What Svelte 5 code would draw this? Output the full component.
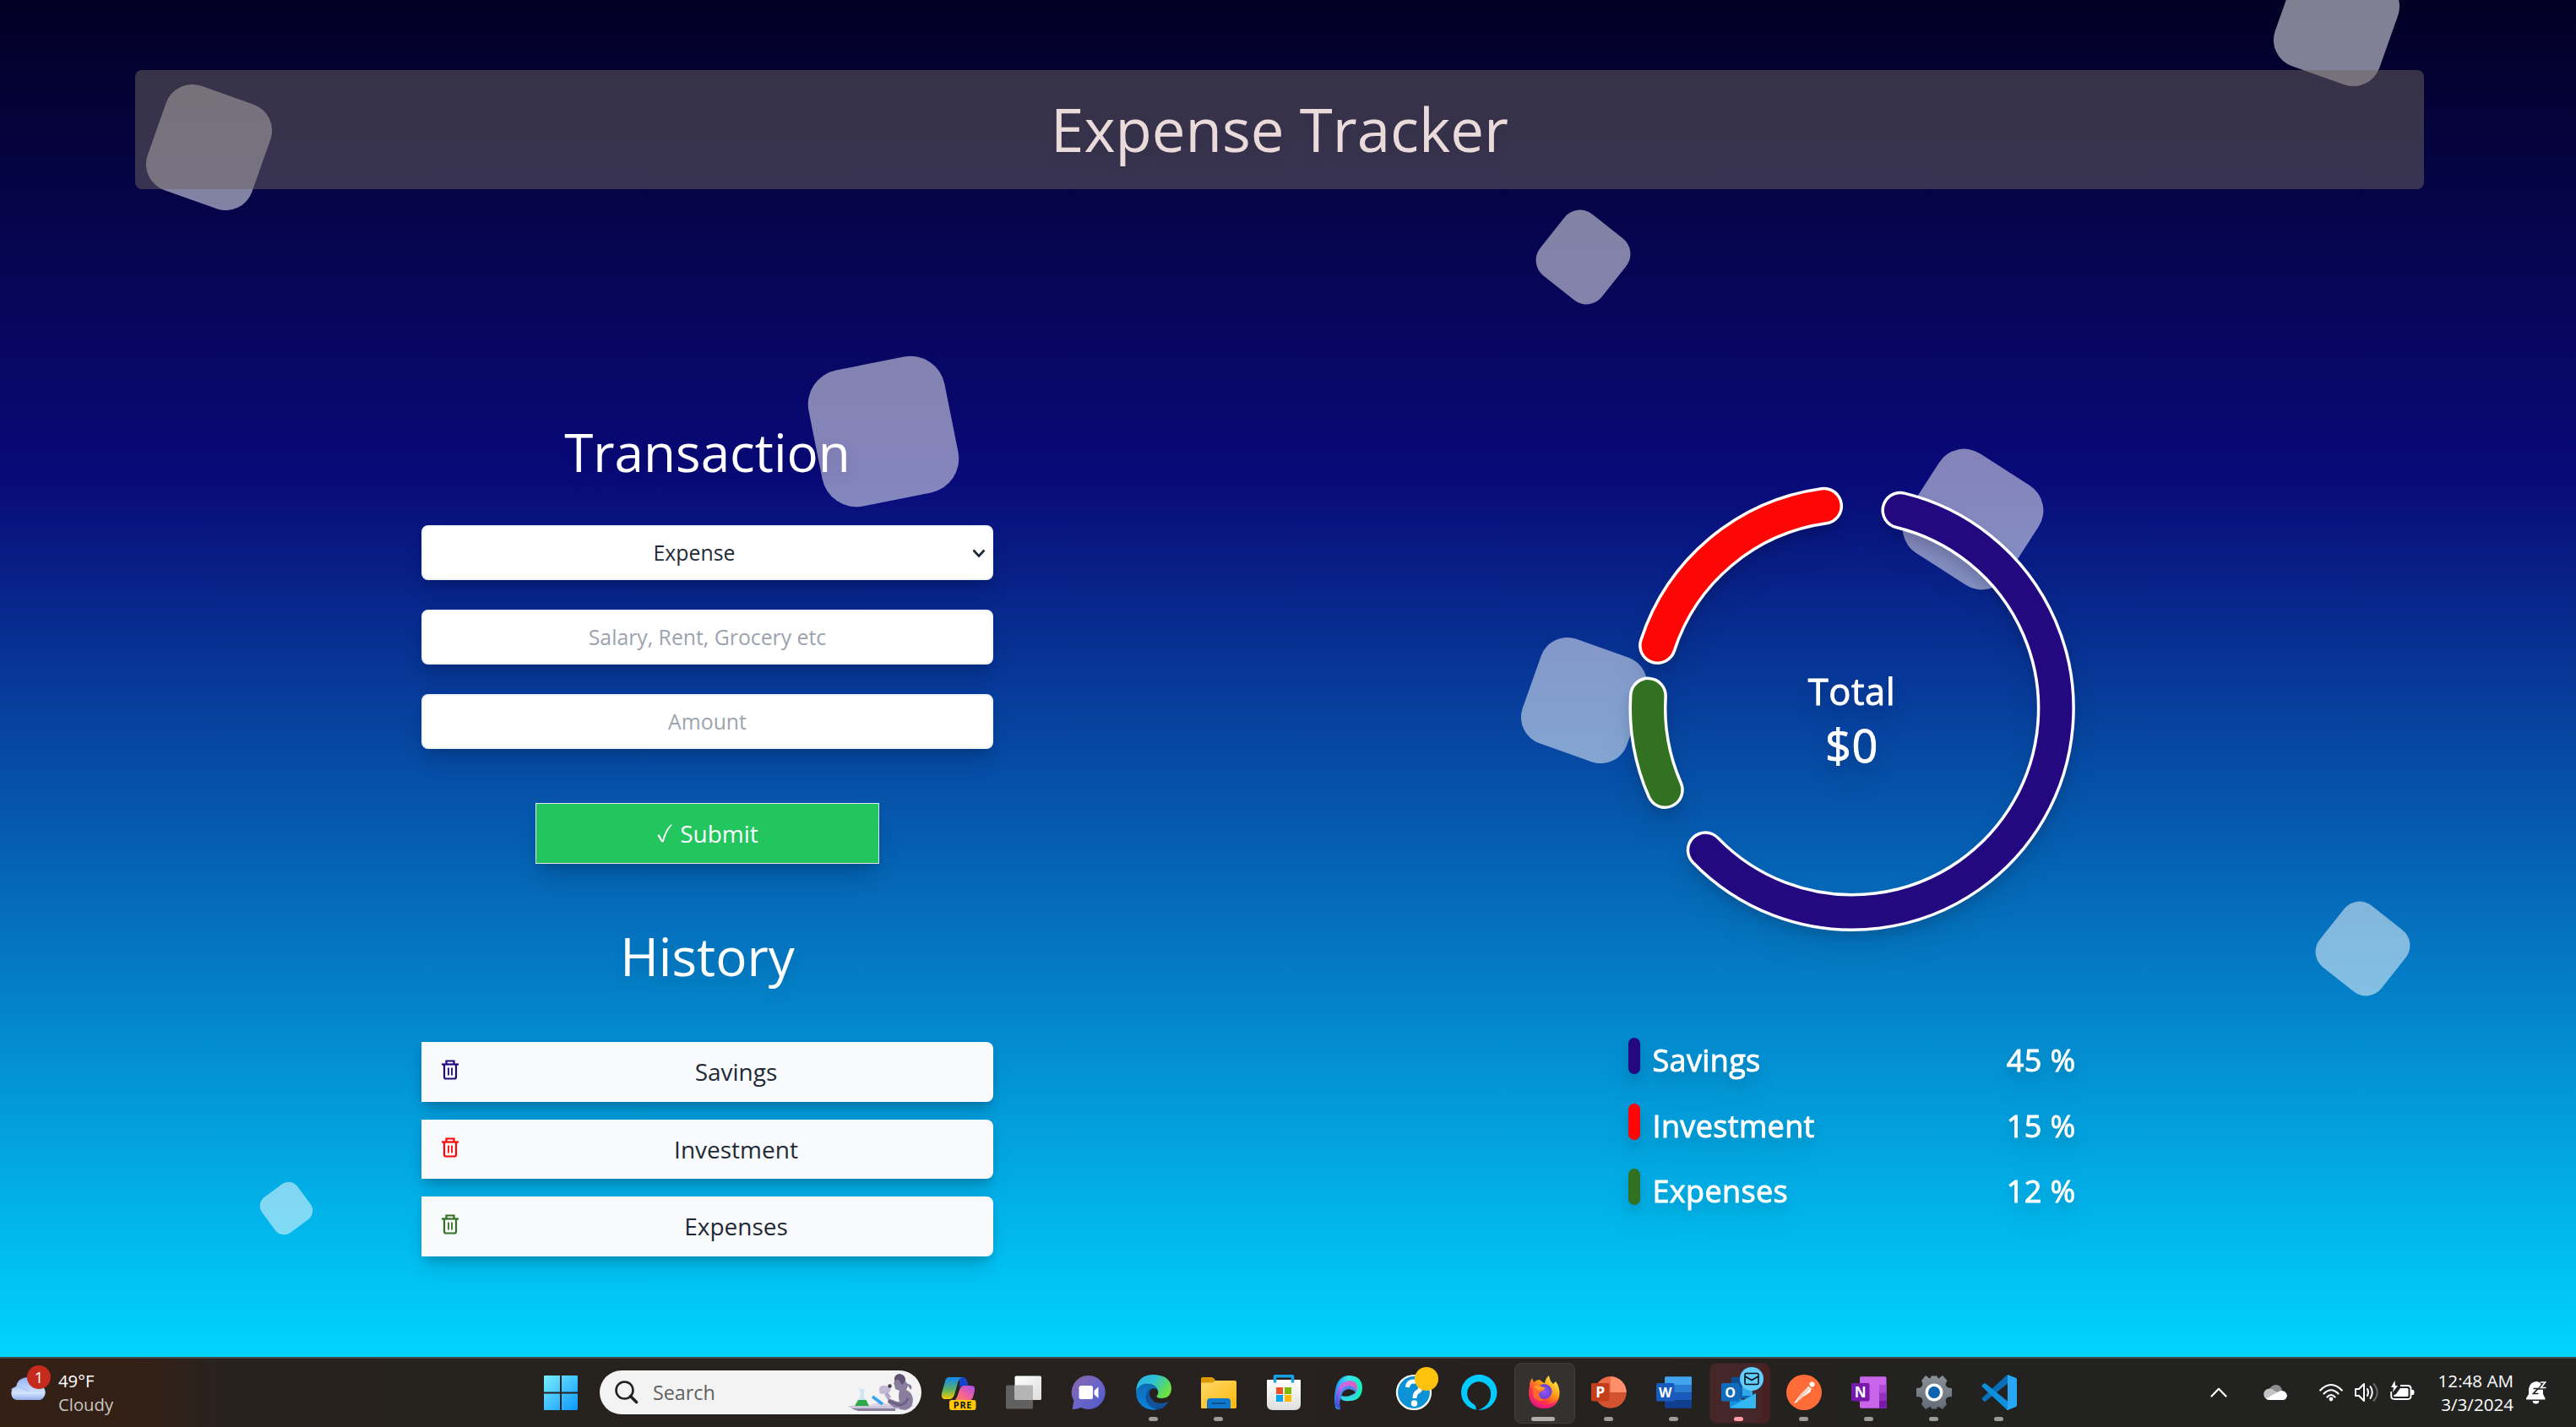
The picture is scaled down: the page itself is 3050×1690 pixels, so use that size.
<script>
  const squares = [
    { x: 247, y: 174.6, s: 131, a: 19.5 },
    { x: 2766.5, y: 27.5, s: 131, a: 19.5 },
    { x: 1874.6, y: 304, s: 93, a: 38.5 },
    { x: 1046, y: 510.6, s: 164, a: -11.3 },
    { x: 2336, y: 614.5, s: 140, a: 32.8 },
    { x: 1875, y: 829.4, s: 131, a: 19.5 },
    { x: 2797, y: 1123, s: 93, a: 38.5 },
    { x: 339, y: 1431, s: 52, a: 53.5 }
  ];
  const items = [
    { name: 'Savings', pct: 45, color: '#23087f' },
    { name: 'Investment', pct: 15, color: '#ff0606' },
    { name: 'Expenses', pct: 12, color: '#327022' }
  ];
  const arcs = [
    { d: 'M56.9 -234.2A241.500 241.500 0 1 1 -173.8 168.3', color: '#23087f' },
    { d: 'M-221.7 97A242 242 0 0 1 -241.6 -14.4', color: '#327022' },
    { d: 'M-230.4 -74A242 242 0 0 1 -33.4 -239.2', color: '#ff0606' }
  ];
</script>

<div class="screen">
  <main class="page">
    <div class="squares">
      {#each squares as q}
        <i style="left:{q.x - q.s / 2}px;top:{q.y - q.s / 2}px;width:{q.s}px;height:{q.s}px;transform:rotate({q.a}deg)"></i>
      {/each}
    </div>
    <header><h1>Expense Tracker</h1></header>
    <div class="columns">
      <section class="left">
        <h2>Transaction</h2>
        <form>
          <div class="select">
            <select><option>Expense</option></select>
            <svg class="arrow" width="18" height="13" viewBox="0 0 18 13"><path d="M2.5 2.5l6.5 7 6.5-7" fill="none" stroke="#1f2937" stroke-width="2.6" /></svg>
          </div>
          <input placeholder="Salary, Rent, Grocery etc" />
          <input placeholder="Amount" />
          <button type="button" class="submit">
            <svg width="20" height="24" viewBox="0 0 20 24"><path d="M1.3 14.2L3.6 13.2L7.4 20.3C9.3 12.4 12.600 5.8 17.400 1.600L18.800 1.600C14.200 7.200 10.600 14 8.800 22.300L6.300 22.300Z" fill="#fff" /></svg>
            <span>Submit</span>
          </button>
        </form>
        <h2 class="history-title">History</h2>
        <div class="history">
          {#each items as it}
            <div class="item">
              <svg width="20" height="24" viewBox="0 0 20 24" fill="none" stroke={it.color} stroke-width="2.200">
                <path d="M0 5.500H20" /><path d="M5.500 5V1.500H14.500V5" /><path d="M3 6V20.500Q3 22.500 5 22.500H15Q17 22.500 17 20.500V6" /><path d="M8 9.500V18.500M12 9.500V18.500" stroke-width="1.800" />
              </svg>
              <span>{it.name}</span>
            </div>
          {/each}
        </div>
      </section>
      <section class="right">
        <div class="donut">
          <svg width="530" height="530" viewBox="-265 -265.500 530 530" fill="none" stroke-linecap="round">
            {#each arcs as a}
              <path d={a.d} stroke="#fff" stroke-width="45" />
              <path d={a.d} stroke={a.color} stroke-width="38" />
            {/each}
          </svg>
          <div class="total"><b>Total</b><strong>$0</strong></div>
        </div>
        <div class="legend">
          {#each items as it}
            <div class="row">
              <svg width="14" height="43"><rect width="14" height="43" rx="7" fill={it.color} /></svg>
              <span>{it.name}</span><em>{it.pct} %</em>
            </div>
          {/each}
        </div>
      </section>
    </div>
  </main>

  <footer class="taskbar">
    <div class="weather">
      <svg width="50" height="50" viewBox="0 0 50 50">
        <defs><linearGradient id="cl" x1="0" y1="0" x2="0" y2="1"><stop offset="0" stop-color="#8fb1f3" /><stop offset=".7" stop-color="#d3e2fa" /><stop offset="1" stop-color="#8fadea" /></linearGradient></defs>
        <path d="M8 43a8 8 0 0 1-1-15.500a12.500 12.500 0 0 1 24-3.500a10 10 0 0 1 5 19Z" fill="url(#cl)" />
        <path d="M1.500 31Q8 25 15 29T22 32" fill="none" stroke="#a9c2f2" stroke-width="1.500" />
        <circle cx="34" cy="16" r="14" fill="#c42b1c" />
        <text x="34" y="22.800" text-anchor="middle" font-size="18.500" fill="#fff">1</text>
      </svg>
      <div class="wtext"><span>49°F</span><span class="dim">Cloudy</span></div>
    </div>

    <svg class="start" width="42" height="42" viewBox="0 0 42 42">
      <defs><linearGradient id="wn" gradientUnits="userSpaceOnUse" x1="0" y1="0" x2="42" y2="42"><stop offset="0" stop-color="#7cf1ff" /><stop offset="1" stop-color="#0a95ff" /></linearGradient></defs>
      <path d="M2 1H20V20.500H1V2Q1 1 2 1ZM22 1H40Q41 1 41 2V20.500H22ZM1 22.500H20V42H2Q1 42 1 41ZM22 22.500H41V41Q41 42 40 42H22Z" fill="url(#wn)" />
    </svg>

    <div class="search">
      <svg width="28" height="28" viewBox="0 0 28 28" fill="none" stroke="#222" stroke-width="2.600"><circle cx="11.500" cy="11.500" r="10" /><path d="M18.500 18.500L25.500 25.500" stroke-width="3.600" stroke-linecap="round" /></svg>
      <span>Search</span>
      <svg class="art" width="78" height="46" viewBox="0 0 78 46">
        <path d="M0 39L78 38L70 43L8 44Z" fill="#cbc4da" /><path d="M4 42H56V45H12Z" fill="#877f9b" />
        <path d="M25 38Q38 33 53 38Z" fill="#d8cfe2" />
        <path d="M13 19H20V20.500H19V28L25 39H8L14.500 28V20.500H13Z" fill="#cfe4ee" /><path d="M12 32H21.500L25 39H8Z" fill="#2fa84c" />
        <path d="M29 28L41 37" stroke="#38a5f3" stroke-width="3.600" />
        <path d="M37 19Q38 14 44 15L50 17Q52 22 47 24L40 25Q36 24 37 19Z" fill="#c5b8d5" /><circle cx="49.500" cy="15.500" r="2.300" fill="#474052" />
        <path d="M45 24L49 30" stroke="#b5a9c9" stroke-width="5" />
        <path d="M55 10Q54 2 61 1Q68 2 68 9Q69 13 74 14Q77 17 74 20L71 15Q70 18 69 20Q76 23 77 31Q77 42 68 44L61 43L61 41H55L47 35L48 30L53 32L58 34L61 34Q59 27 61 21L56 19L55 14L54 13Z" fill="#8a7e9f" />
        <path d="M55 10Q54 2 61 1Q68 2 68 9L64 14Q62 11 60 8Q57 7 55 10Z" fill="#5e5470" />
        <path d="M48 33L60 38Q68 38 71 30" fill="none" stroke="#6d6284" stroke-width="3" />
      </svg>
    </div>

    <nav class="apps">
      <div class="app">
        <svg width="42" height="42" viewBox="0 0 42 42">
          <defs>
            <linearGradient id="cp1" x1="0" y1="0" x2="0" y2="1"><stop offset=".1" stop-color="#1a8fe0" /><stop offset=".6" stop-color="#63b45a" /><stop offset="1" stop-color="#ffc800" /></linearGradient>
            <linearGradient id="cp2" x1="1" y1="0" x2="0" y2="1"><stop offset="0" stop-color="#a64df0" /><stop offset=".5" stop-color="#ee5f9d" /><stop offset="1" stop-color="#ff8a56" /></linearGradient>
          </defs>
          <path d="M22 3H26Q30 3 31 8L33 13H27Q23 13 22 17Z" fill="#1743c7" />
          <path d="M10 3H25Q21 5 20 10L16 24Q14 29 10 29H4Q0 28 1 22L5 8Q6 3 10 3Z" fill="url(#cp1)" />
          <path d="M27 13H36Q41 13 40 19L38 27Q36 31 31 31H15Q18 30 20 24Q23 13 27 13Z" fill="url(#cp2)" />
          <rect x="10" y="30" width="31.500" height="12" rx="3" fill="#ffc60a" />
          <text x="26" y="40" text-anchor="middle" font-size="11" font-weight="700" letter-spacing=".7" fill="#151515">PRE</text>
        </svg>
      </div>
      <div class="app">
        <svg width="42" height="42" viewBox="0 0 42 42">
          <defs><linearGradient id="tv" x1="0" y1="0" x2="1" y2="1"><stop offset="0" stop-color="#fff" /><stop offset="1" stop-color="#dcdcdc" /></linearGradient></defs>
          <rect x="0" y="12.500" width="32" height="28" rx="1.500" fill="#606060" /><rect x="10.500" y="1.500" width="31.500" height="28.500" rx="1.500" fill="url(#tv)" /><path d="M10.500 12.500H30.500Q32 12.500 32 14V30H12Q10.500 30 10.500 28.500Z" fill="#b4b4b4" />
        </svg>
      </div>
      <div class="app">
        <svg width="42" height="42" viewBox="0 0 42 42">
          <defs><linearGradient id="ch" x1="0" y1="0" x2="1" y2="1"><stop offset="0" stop-color="#8b64a8" /><stop offset=".5" stop-color="#6b66c9" /><stop offset="1" stop-color="#5157c8" /></linearGradient></defs>
          <path d="M21 1A20 20 0 1 1 12 39Q7 41 2.500 41Q1 41 2 39L3.500 31A20 20 0 0 1 21 1Z" fill="url(#ch)" />
          <rect x="9.500" y="13" width="16.500" height="16" rx="2.500" fill="#fff" /><path d="M27.500 19L32.500 14.500V28L27.500 23.500Z" fill="#fff" />
        </svg>
      </div>
      <div class="app">
        <svg width="42" height="42" viewBox="0 0 42 42">
          <defs>
            <linearGradient id="eg" x1="0" y1="0" x2="1" y2=".5"><stop offset="0" stop-color="#2eaef0" /><stop offset=".5" stop-color="#2dc2d2" /><stop offset="1" stop-color="#6be03e" /></linearGradient>
            <linearGradient id="eb" x1="0" y1="0" x2="0" y2="1"><stop offset="0" stop-color="#0d6bb5" /><stop offset="1" stop-color="#0a84de" /></linearGradient>
          </defs>
          <path d="M0 20Q1 0 21 0Q42 1 42 17Q41 28 30 28Q24 28 24.500 25Q27 23 26 19Q23 10 12 11Q4 12 0 20Z" fill="url(#eg)" />
          <path d="M0 21Q2 11 13 10.500Q23 11 26 18Q24 16 20 16Q13 18 12 26Q13 38 26 41Q20 43 12 40Q0 34 0 21Z" fill="url(#eb)" />
          <path d="M20 16Q15 18 16 24Q19 34 30 34Q35 34 39 31Q34 41 25 41Q12 38 11.500 27Q12 18 20 16Z" fill="#10529b" />
        </svg><i class="dot"></i>
      </div>
      <div class="app">
        <svg width="42" height="42" viewBox="0 0 42 42">
          <defs><linearGradient id="fo" x1="0" y1="0" x2="1" y2="1"><stop offset="0" stop-color="#ffd869" /><stop offset="1" stop-color="#fab90c" /></linearGradient></defs>
          <path d="M0 5Q0 3 2 3H12Q14 3 16 5L18 10H0Z" fill="#dd9a00" /><path d="M0 9.500H12Q15 9.500 17 7H40Q42 7 42 9V38.500Q42 40 40.500 40H1.500Q0 40 0 38.500Z" fill="url(#fo)" />
          <path d="M7 40V32Q7 28 11 28H31Q35 28 35 32V40Z" fill="#0f78cc" /><path d="M13 34H29" stroke="#08518f" stroke-width="2" />
        </svg><i class="dot"></i>
      </div>
      <div class="app">
        <svg width="42" height="42" viewBox="0 0 42 42">
          <defs><linearGradient id="st" x1="0" y1="0" x2="0" y2="1"><stop offset="0" stop-color="#fff" /><stop offset="1" stop-color="#dedede" /></linearGradient></defs>
          <path d="M2 6H40Q41 6 41 7V35Q41 42 34 42H8Q1 42 1 35V7Q1 6 2 6Z" fill="url(#st)" />
          <path d="M10.500 9.500V1.800H31.500V9.500" fill="none" stroke="#199ee2" stroke-width="3.500" stroke-linejoin="round" />
          <path d="M12 15h8v8h-8z" fill="#f25022" /><path d="M22 15h8v8h-8z" fill="#7fba00" /><path d="M12 24h8v8h-8z" fill="#00a4ef" /><path d="M22 24h8v8h-8z" fill="#ffb900" />
        </svg>
      </div>
      <div class="app">
        <svg width="42" height="42" viewBox="0 0 42 42">
          <defs>
            <linearGradient id="p1" x1="0" y1=".3" x2="1" y2=".4"><stop offset="0" stop-color="#1b8df5" /><stop offset=".45" stop-color="#3be3f0" /><stop offset="1" stop-color="#10f0b4" /></linearGradient>
            <linearGradient id="p2" x1="0" y1="1" x2="1" y2="0"><stop offset="0" stop-color="#1748d8" /><stop offset=".5" stop-color="#c06af0" /><stop offset="1" stop-color="#e35bb8" /></linearGradient>
          </defs>
          <path d="M5 38Q3 30 5 18Q8 1 22 1Q37 2 37 16Q36 31 22 31Q14 32 11 28Q8 33 11 41Q6 42 5 38Z" fill="url(#p1)" />
          <path d="M5 36Q4 9 22 7Q32 8 31 16Q31 25 22 26Q14 27 12 26Q9 32 11 41Q7 41 5 36Z" fill="url(#p2)" />
          <path d="M9 30Q10 14 22 13Q29 15 30 19Q28 25 20 26Q14 26 12 27Z" fill="#4f86ec" /><path d="M12 26Q13 18 21 17Q27 18 29 21Q27 26 20 26Z" fill="#25211f" /><path d="M12 25Q21 28 31 20Q30 29 20 30Q13 30 12 25Z" fill="#36d5df" />
        </svg>
      </div>
      <div class="app">
        <svg width="42" height="42" viewBox="0 0 42 42">
          <circle cx="21" cy="21" r="20" fill="#0b93d6" stroke="#fff" stroke-width="2.200" />
          <path d="M13.500 15Q14 8 21 8Q29 8 29 15Q29 19 24.500 21Q22 23 22 28" fill="none" stroke="#fff" stroke-width="5" /><circle cx="21.500" cy="34" r="3.800" fill="#fff" />
          <circle cx="36" cy="5" r="14" fill="#ffc20e" />
        </svg>
      </div>
      <div class="app">
        <svg width="42" height="42" viewBox="0 0 42 42"><path fill-rule="evenodd" d="M21 0A21 21 0 0 1 22 42H19.500Q24 41 27 38.500A18 18 0 0 0 35 21A14 14 0 1 0 13 33.800Q17.500 36 17.500 39V41.700A21 21 0 0 1 21 0Z" fill="#00caff" /></svg>
      </div>
      <div class="app active">
        <svg width="42" height="42" viewBox="0 0 42 42">
          <defs>
            <linearGradient id="ff" x1="1" y1="0" x2=".2" y2="1"><stop offset=".1" stop-color="#fff04a" /><stop offset=".45" stop-color="#ff980e" /><stop offset=".72" stop-color="#ff3647" /><stop offset="1" stop-color="#e3158a" /></linearGradient>
            <radialGradient id="fp"><stop offset="0" stop-color="#9059ff" /><stop offset="1" stop-color="#6a3fcd" /></radialGradient>
          </defs>
          <path d="M4 14Q4 8 7 4L9 9Q12 6 16 6Q19 9 22 10Q23 4 27 1Q28 8 32 11L35 8Q40 15 39.500 23Q38 40 21 40Q3 39 3 21Z" fill="url(#ff)" />
          <circle cx="21.500" cy="20" r="9" fill="url(#fp)" />
          <path d="M8 14Q13 12 16 14L22 18Q18 20 15 22Q15 29 23 30Q15 33 9 27Q7 21 8 14Z" fill="#ff6a2c" /><path d="M9 14Q14 12 18 14L23 16Q19 19 15 19Z" fill="#ff9e20" />
          <path d="M4 27Q12 37 24 36Q34 34 38 28Q35 40 21 40Q8 40 4 27Z" fill="#ea1680" opacity=".65" />
        </svg><i class="dot wide"></i>
      </div>
      <div class="app">
        <svg width="42" height="42" viewBox="0 0 42 42">
          <circle cx="23" cy="21" r="18.700" fill="#d35230" /><path d="M23 2.300V21H4.300A18.700 18.700 0 0 1 23 2.300Z" fill="#ed6c47" /><path d="M23 2.300A18.700 18.700 0 0 1 41.700 21H23Z" fill="#ff8f6b" />
          <rect x="0" y="10" width="21.500" height="21.500" rx="1.800" fill="#c43e1c" /><text x="10.700" y="27" text-anchor="middle" font-size="17.500" font-weight="700" fill="#fff">P</text>
        </svg><i class="dot"></i>
      </div>
      <div class="app">
        <svg width="42" height="42" viewBox="0 0 42 42">
          <path d="M11.500 2.300H41Q42 2.300 42 3.500V12H10V3.800Q10 2.300 11.500 2.300Z" fill="#41a5ee" /><path d="M10 12H42V21.500H10Z" fill="#2b7cd3" /><path d="M10 21.500H42V30.500H10Z" fill="#185abd" /><path d="M10 30.500H42V38.500Q42 39.700 41 39.700H11.500Q10 39.700 10 38Z" fill="#103f91" />
          <rect x="0" y="10" width="21.500" height="21.500" rx="1.800" fill="#185abd" /><text x="10.700" y="26.500" text-anchor="middle" font-size="16" font-weight="700" fill="#fff">W</text>
        </svg><i class="dot"></i>
      </div>
      <div class="app alert">
        <svg width="42" height="42" viewBox="0 0 42 42">
          <path d="M12 3H37V28H12Z" fill="#1066b5" /><path d="M12 3H25V14H12Z" fill="#0a4e94" /><path d="M25 12H37V25H25Z" fill="#32a9e7" />
          <path d="M10 22L26 30L41 22V38Q41 40 39 40H12Q10 40 10 38Z" fill="#1490df" /><path d="M10 39L41 22V38Q41 40 39 40Z" fill="#35b8f1" />
          <rect x="0" y="10" width="21.500" height="21.500" rx="1.800" fill="#0f6cbd" /><text x="10.700" y="26.500" text-anchor="middle" font-size="16" font-weight="700" fill="#fff">O</text>
          <circle cx="36" cy="5" r="14" fill="#60cdff" /><rect x="28" y="-1.500" width="16" height="13" rx="1.500" fill="none" stroke="#111" stroke-width="1.600" /><path d="M28 2L36 6.500L44 2" fill="none" stroke="#111" stroke-width="1.600" />
        </svg><i class="dot pink"></i>
      </div>
      <div class="app">
        <svg width="42" height="42" viewBox="0 0 42 42"><circle cx="21" cy="21" r="21" fill="#ff6c37" /><circle cx="30.500" cy="11.500" r="3" fill="#fff" /><path d="M26 14L30 16.500L28 21L20 26L12 33L9 34Q14 27 17 23Z" fill="#fff" /><path d="M28 16L13 31M25 16L15 27" stroke="#ff6c37" stroke-width=".7" /></svg><i class="dot"></i>
      </div>
      <div class="app">
        <svg width="42" height="42" viewBox="0 0 42 42">
          <path d="M11.500 2.300H40Q41.500 2.300 41.500 4V39.700H11.500Q10 39.700 10 38V4Q10 2.300 11.500 2.300Z" fill="#ca64ea" /><path d="M33 12H41.500V21.500H33Z" fill="#ae4bd5" /><path d="M33 21.500H41.500V30.500H33Z" fill="#9332bf" /><path d="M33 30.500H41.500V38Q41.500 39.700 40 39.700H33Z" fill="#7719aa" />
          <rect x="0" y="10" width="21.500" height="21.500" rx="1.800" fill="#7719aa" /><text x="10.700" y="27" text-anchor="middle" font-size="17" font-weight="700" fill="#fff">N</text>
        </svg><i class="dot"></i>
      </div>
      <div class="app">
        <svg width="42" height="42" viewBox="0 0 42 42">
          <defs><linearGradient id="se" x1="0" y1="0" x2="0" y2="1"><stop offset="0" stop-color="#8b9097" /><stop offset="1" stop-color="#626c77" /></linearGradient></defs>
          <path d="M11 1L15 4Q17 5 17.500 1.500H24.500Q25 5 27 4L31 1L36.500 7Q34 11 35 13Q36 16 42 16V26Q36 26 35 29Q34 31 36 35L31 41L27 38.500Q25 37 24 40.500H18Q17 37 15 38.500L11 41L6 35Q8 31 7 29Q6 26 0 26V16Q6 16 7 13Q8 11 6 7Z" fill="url(#se)" />
          <circle cx="21" cy="21" r="10.500" fill="#fff" /><circle cx="21" cy="21" r="7" fill="#0f62b0" />
        </svg><i class="dot"></i>
      </div>
      <div class="app">
        <svg width="42" height="42" viewBox="0 0 42 42">
          <path d="M31 10.500L5 31.500Q4 32.500 3 31.500L.8 29.500Q0 28.500 1 27.500L29.500 1Q31 0 32 1Z" fill="#0b6fb8" /><path d="M31 31.500L5 10.500Q4 9.500 3 10.500L.8 12.500Q0 13.500 1 14.500L29.500 41Q31 42 32 41Z" fill="#0d8fdc" /><path d="M31 0L41 4Q42 4.500 42 6V36Q42 37.500 41 38L31 42Q29 42 31 39Z" fill="#2aa7f3" />
        </svg><i class="dot"></i>
      </div>
    </nav>

    <div class="tray">
      <svg class="chev" width="20" height="12" viewBox="0 0 20 12"><path d="M1.500 10.500L10 1.800L18.500 10.500" fill="none" stroke="#fff" stroke-width="2.200" stroke-linecap="round" stroke-linejoin="round" /></svg>
      <svg class="od" width="28" height="18" viewBox="0 0 28 18"><path d="M7 5Q10 0 15 0Q20 0 22 6L20 10H7Z" fill="#8c8c8c" /><path d="M7 18A6.500 6.500 0 0 1 7 4.500Q10 4 13 7L22 12L18 18Z" fill="#c4c4c4" /><path d="M3 16.500L18 8Q21 6 25 8Q28 10 28 13Q27 18 23 18H7Q5 18 3 16.500Z" fill="#fff" /></svg>
      <svg class="wifi" width="28" height="22" viewBox="0 0 28 22" fill="none" stroke="#fff" stroke-width="2.200" stroke-linecap="round"><path d="M1.200 8.500Q14-4.500 26.800 8.500M5.500 12.500Q14 4 22.500 12.500M9.500 16.500Q14 11.500 18.500 16.500" /><circle cx="14" cy="19" r="1.300" fill="#fff" /></svg>
      <svg class="snd" width="29" height="24" viewBox="0 0 29 24" fill="none" stroke="#fff" stroke-width="2" stroke-linecap="round" stroke-linejoin="round"><path d="M1 8H5L11 2V22L5 16H1Z" /><path d="M15 8Q17 12 15 16M18.500 5Q23 12 18.500 19" /><path d="M22.500 2Q31 12 22.500 22" stroke="#666" /></svg>
      <svg class="bat" width="29" height="24" viewBox="0 0 29 24"><path d="M12 6H20.500Q24.500 6 24.500 9.500V18.500Q24.500 22 20.500 22H5Q1.200 22 1.200 18.500V13" fill="none" stroke="#fff" stroke-width="1.900" /><path d="M25 11H27Q28.500 11 28.500 14Q28.500 17 27 17H25Z" fill="#fff" /><path d="M12 9H20Q21.500 9 21.500 10.500V17.500Q21.500 19 20 19H5Q4 19 4 17.500L7 16Z" fill="#fff" /><path d="M5.500 0L1 8H4L3 14L9 6H6Z" fill="#fff" /></svg>
      <div class="clock"><span>12:48 AM</span><span>3/3/2024</span></div>
      <svg class="bell" width="25" height="28" viewBox="0 0 25 28"><path d="M12 1A9 9 0 0 1 20 8V16L22.500 21V22.500H0V21L3 16V10Q4 2 12 1Z" fill="#fff" /><path d="M7.500 24H15.500Q15 27.500 11.500 27.500Q8 27.500 7.500 24Z" fill="#fff" /><path d="M8.500 9.500H14L8.500 15.500H14.500" fill="none" stroke="#222" stroke-width="1.700" /><path d="M17 2H22.500L17.500 8.500H23.500" fill="none" stroke="#222" stroke-width="4.500" /><path d="M17 2H22.500L17.500 8.500H23.500" fill="none" stroke="#fff" stroke-width="1.700" /></svg>
    </div>
  </footer>
</div>

<style>
  :global(body) { margin: 0; }
  .screen { width: 3050px; height: 1690px; display: flex; flex-direction: column; overflow: hidden; font-family: 'Open Sans', 'Noto Sans', sans-serif; color: #fff; }
  .screen * { box-sizing: border-box; }
  .page { position: relative; flex: 0 0 1607px; padding: 83px 180px 0 160px; background: linear-gradient(180deg, #020024 0%, #090979 35%, #00d4ff 100%); overflow: hidden; }
  .squares i { position: absolute; border-radius: 25%; background: rgba(255, 255, 255, 0.5); }
  header { position: relative; height: 141px; padding-bottom: 1px; border-radius: 8px; background: rgba(107, 99, 93, 0.5); display: flex; align-items: center; justify-content: center; }
  h1, h2 { margin: 0; font-weight: 400; filter: drop-shadow(0 8px 8px rgba(0, 0, 0, 0.1)); }
  h1 { font-size: 70.800px; line-height: 80px; color: #eadada; }
  h2 { font-size: 62px; line-height: 72px; }
  .columns { position: relative; display: grid; grid-template-columns: 1fr 1fr; }
  .left { display: flex; flex-direction: column; align-items: center; padding-top: 275px; }
  form { width: 677px; margin-top: 51px; display: flex; flex-direction: column; gap: 35px; align-items: center; }
  .select { position: relative; width: 100%; height: 65px; }
  select, input { display: block; width: 100%; height: 65px; margin: 0; padding: 0 2px 2px; border: 2px solid #f1f2f4; border-radius: 8px; background: #fff; color: #1f2937; font-family: inherit; font-size: 24.800px; text-align: center; text-align-last: center; box-shadow: 0 18px 28px -6px rgba(0, 0, 0, 0.12), 0 8px 12px -4px rgba(0, 0, 0, 0.12); outline: none; }
  select { appearance: none; padding: 0 35px 2px 4px; }
  input::placeholder { color: #9ca3af; opacity: 1; }
  .arrow { position: absolute; right: 8px; top: 27px; }
  .submit { width: 407px; height: 72px; margin-top: 29px; padding: 0; border: 1.500px solid #e5e7eb; background: #22c55e; color: #fff; font: 28px 'Open Sans', sans-serif; display: flex; align-items: center; justify-content: center; gap: 8px; box-shadow: 0 20px 30px -6px rgba(0, 0, 0, 0.14), 0 8px 12px -6px rgba(0, 0, 0, 0.14); }
  .history-title { margin-top: 73px; }
  .history { width: 677px; margin-top: 66px; display: flex; flex-direction: column; gap: 21px; }
  .item { height: 70.500px; display: flex; align-items: center; padding: 0 20px 0 24px; border-radius: 0 8px 8px 0; background: #f9fafc; color: #1f2937; font-size: 28px; box-shadow: 0 16px 26px -6px rgba(0, 0, 0, 0.13), 0 8px 12px -4px rgba(0, 0, 0, 0.13), 0 2px 12px rgba(0, 0, 0, 0.06); }
  .item span { flex: 1; text-align: center; padding-left: 44px; }
  .item svg { flex: none; margin-top: -4px; }
  .right { display: flex; flex-direction: column; align-items: center; padding-top: 349px; }
  .donut { display: grid; place-items: center; width: 530px; height: 530px; }
  .donut > * { grid-area: 1 / 1; }
  .donut svg { overflow: visible; }
  .donut svg, .total, .legend { filter: drop-shadow(0 8px 7px rgba(0, 0, 0, 0.13)) drop-shadow(0 22px 16px rgba(0, 0, 0, 0.05)); }
  .total { display: flex; flex-direction: column; align-items: center; padding-top: 27px; -webkit-text-stroke: 0.900px #fff; }
  .total b { font-size: 43.500px; line-height: 60px; font-weight: 400; letter-spacing: 0.500px; }
  .total strong { font-size: 54px; line-height: 66px; font-weight: 400; letter-spacing: 0.500px; }
  .legend { width: 530px; margin-top: 126px; }
  .row { display: flex; height: 77.500px; align-items: flex-start; font-size: 36px; line-height: 54px; letter-spacing: 0.350px; -webkit-text-stroke: 0.900px #fff; }
  .row span { margin-left: 15px; }
  .row em { margin-left: auto; font-style: normal; }
  .taskbar { flex: 0 0 83px; display: flex; align-items: center; padding-bottom: 1px; border-top: 2px solid #4a4745; background: linear-gradient(90deg, #342015 0, #332016 180px, #28221f 260px, #26221e 500px, #26211e 1800px, #23221f 2100px, #222221 2600px); }
  .weather { width: 643px; flex: none; display: flex; align-items: center; padding-left: 12px; font-size: 20.300px; line-height: 28px; }
  .weather svg { margin-top: -18px; }
  .wtext { display: flex; flex-direction: column; margin-left: 7px; margin-top: -1px; }
  .dim { color: #cbc5c0; }
  .start { flex: none; }
  .search { flex: none; width: 381px; height: 52px; margin-left: 25px; border-radius: 26px; background: #f3f3f3; color: #606060; font-size: 23.300px; display: flex; align-items: center; padding: 0 9px 0 18px; }
  .search span { margin-left: 17px; }
  .art { margin-left: auto; }
  .apps { display: flex; margin-left: 5px; height: 100%; }
  .app { position: relative; width: 77px; flex: none; display: flex; align-items: center; justify-content: center; }
  .app svg { position: relative; overflow: visible; }
  .active::before, .alert::before { content: ''; position: absolute; left: 4px; top: 5px; width: 70px; height: 70px; border-radius: 8px; background: #35312e; border: 1px solid #403d3a; }
  .alert::before { background: #462729; border-color: #3a2324; box-shadow: inset -8px 0 0 #482022; }
  .dot { position: absolute; bottom: 6px; left: 33px; width: 11px; height: 5px; border-radius: 3px; background: #9b9a98; }
  .wide { width: 28px; left: 24px; background: #b0aeac; }
  .pink { background: #ff9ba7; }
  .tray { margin-left: auto; display: flex; align-items: center; padding-right: 34px; }
  .tray svg { flex: none; }
  .od { margin-left: 43px; }
  .wifi { margin-left: 38px; }
  .snd { margin-left: 14px; }
  .bat { margin-left: 13px; margin-top: -5px; }
  .clock { display: flex; flex-direction: column; align-items: flex-end; width: 117px; margin-top: -1px; font-size: 20.600px; line-height: 28px; white-space: nowrap; }
  .bell { margin-left: 15px; }
</style>
